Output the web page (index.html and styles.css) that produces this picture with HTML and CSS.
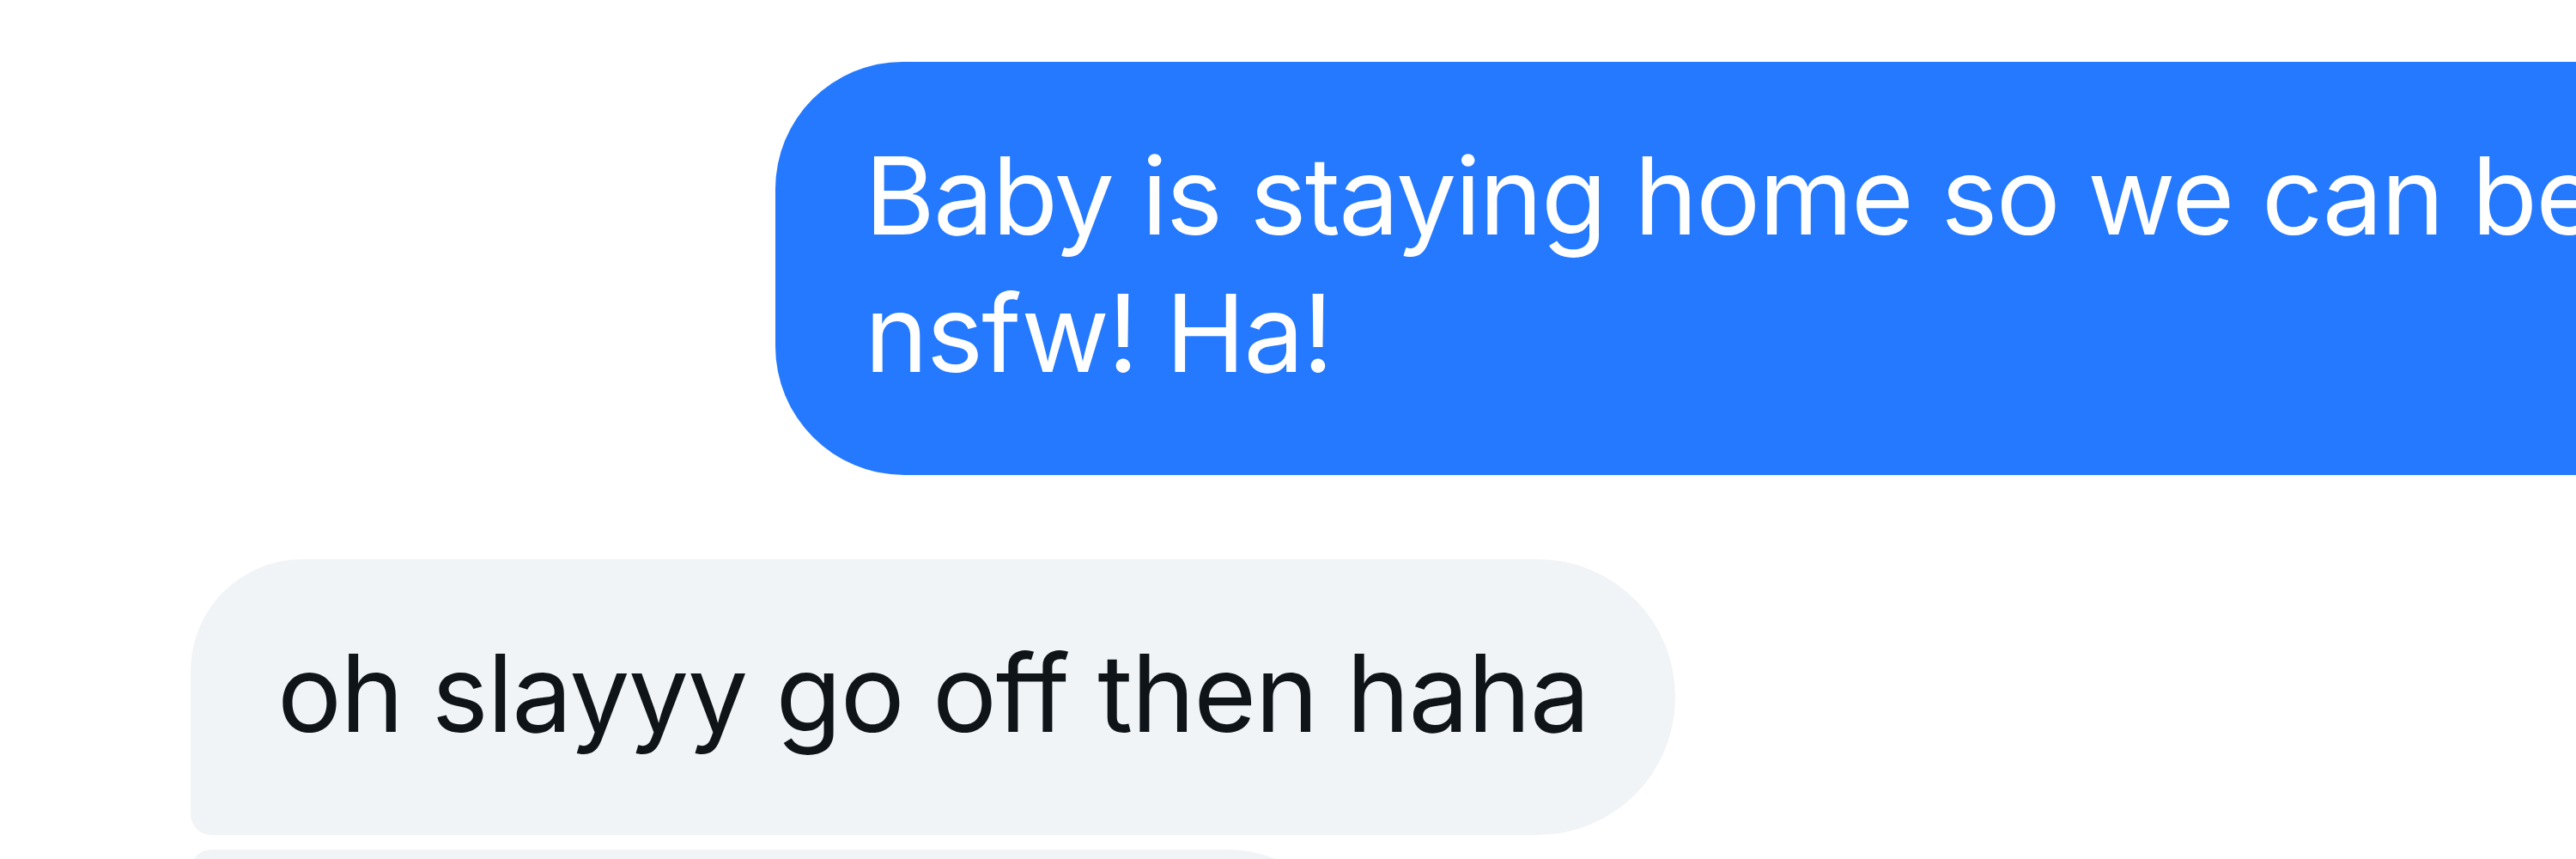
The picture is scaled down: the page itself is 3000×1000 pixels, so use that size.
FILE: index.html
```html
<!DOCTYPE html>
<html lang="en">
<head>
<meta charset="utf-8">
<title>Messages</title>
<link rel="stylesheet" href="styles.css">
</head>
<body>
<main class="thread">
  <div class="bubble bubble-out">Baby is staying home so we can be<br>nsfw! Ha!</div>
  <div class="group-in">
    <div class="bubble bubble-in bubble-first">oh slayyy go off then haha</div>
    <div class="bubble bubble-in bubble-next">have so much fun tonight</div>
  </div>
</main>
</body>
</html>
```
FILE: styles.css
```css
html, body {
  margin: 0;
  padding: 0;
  background: #ffffff;
  overflow: hidden;
}

.thread {
  width: 3000px;
  height: 1000px;
  overflow: hidden;
  display: flex;
  flex-direction: column;
  align-items: flex-start;
  padding: 72px 0 0 222px;
  box-sizing: border-box;
  gap: 98px;
  font-family: Inter, "Noto Sans", "Liberation Sans", sans-serif;
  font-size: 125px;
  line-height: 160px;
  letter-spacing: -1.4px;
}

.bubble {
  padding: 76px 100px 85px 101px;
  white-space: nowrap;
  box-sizing: border-box;
}

.bubble-out {
  margin-left: 681px;
  background: #2479ff;
  color: #ffffff;
  border-radius: 148px 0 0 150px;
  padding-left: 104px;
  padding-right: 200px;
  letter-spacing: -1.8px;
}

.group-in {
  display: flex;
  flex-direction: column;
  align-items: flex-start;
  gap: 17px;
}

.bubble-in {
  background: #f1f4f6;
  color: #0f1419;
}

.bubble-first {
  border-radius: 130px 160px 160px 24px;
}

.bubble-next {
  width: 1358px;
  overflow: hidden;
  border-radius: 24px 150px 150px 130px;
}
```
